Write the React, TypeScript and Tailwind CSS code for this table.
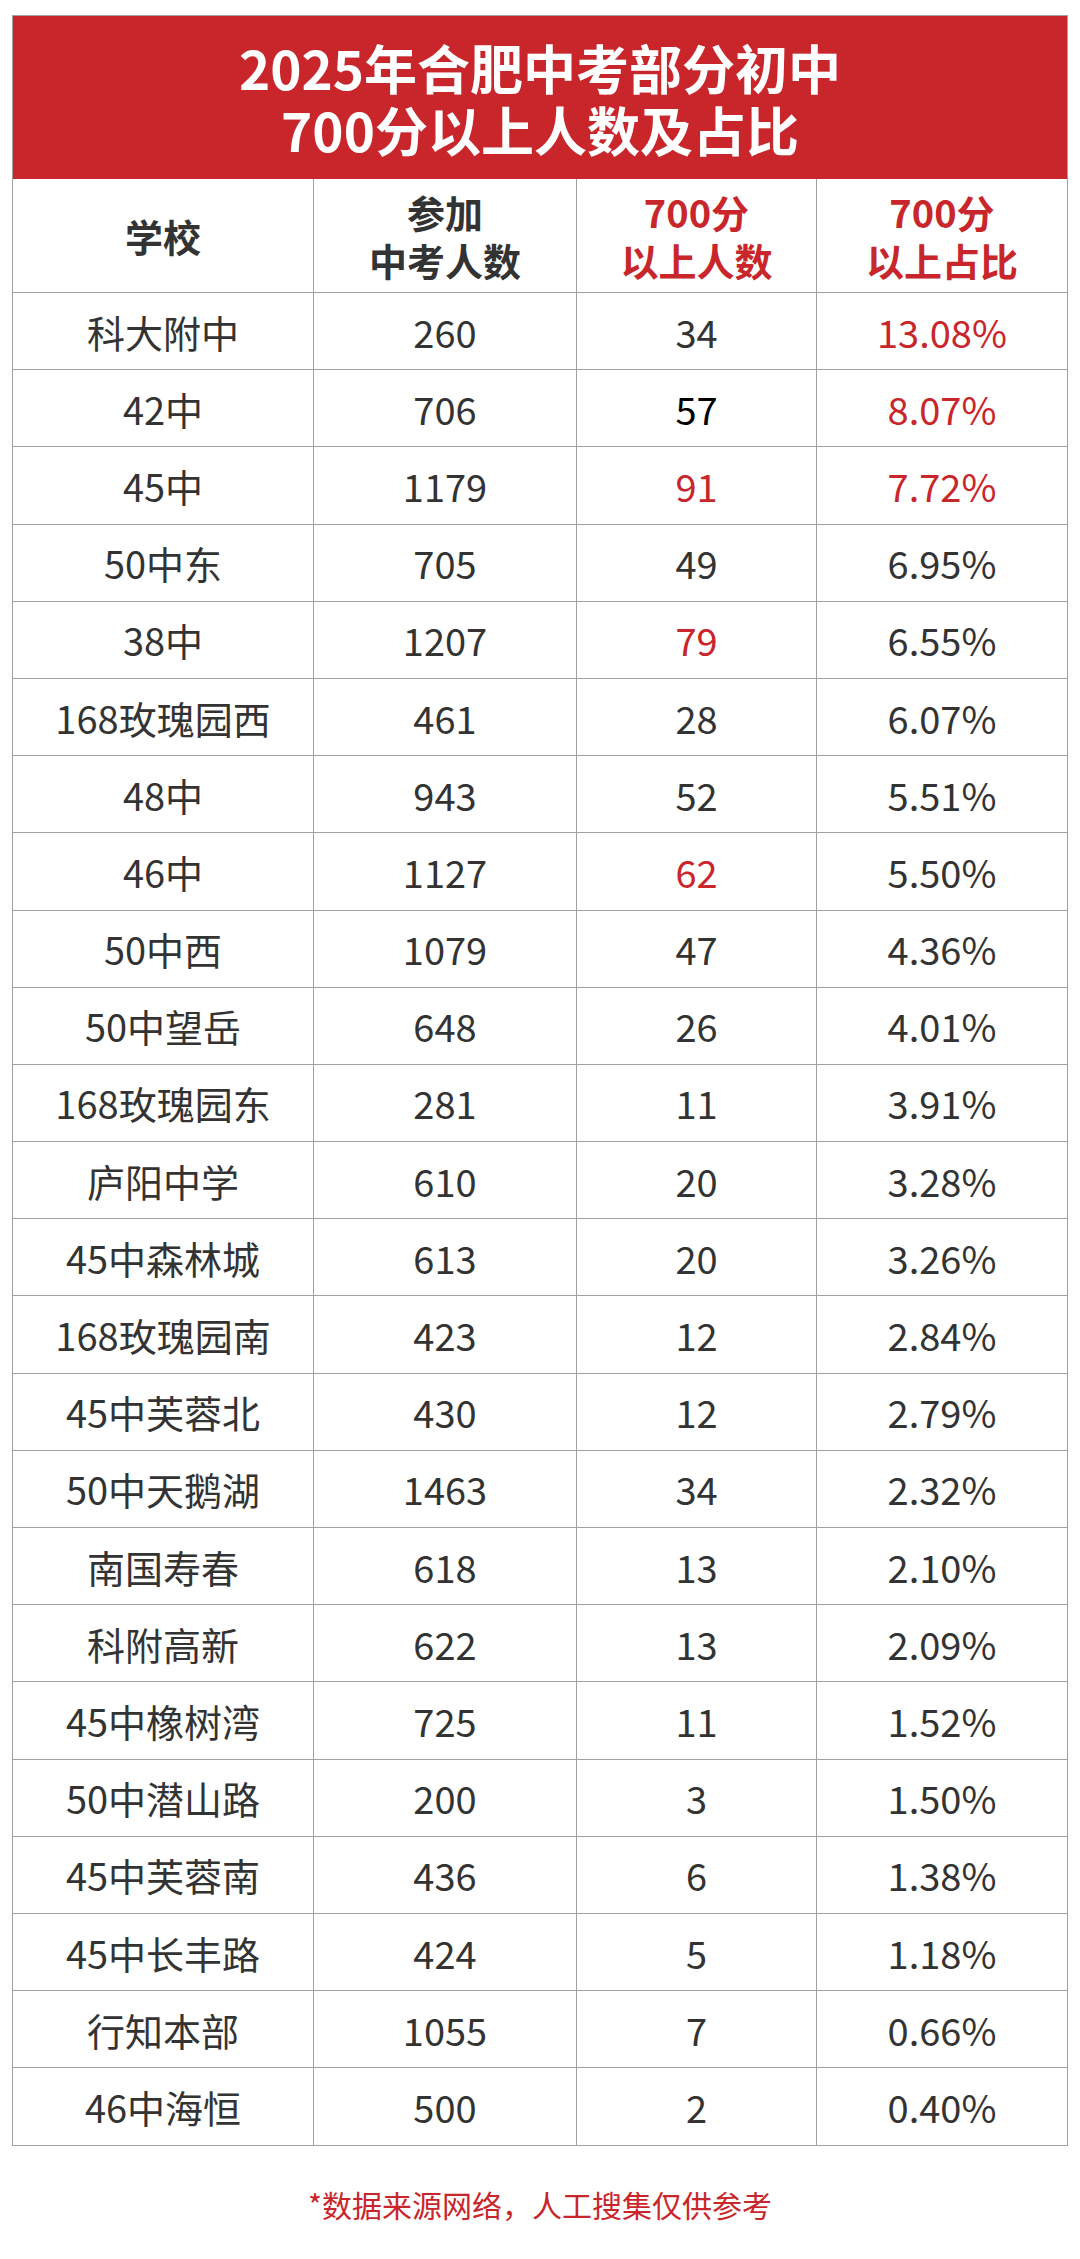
type Row = {
  name: string;
  total: string;
  count: string;
  pct: string;
  countColor?: string;
  pctColor?: string;
};

const RED = "text-[#c8262b]";

const rows: Row[] = [
  { name: "科大附中", total: "260", count: "34", pct: "13.08%", pctColor: RED },
  { name: "42中", total: "706", count: "57", pct: "8.07%", countColor: "text-black", pctColor: RED },
  { name: "45中", total: "1179", count: "91", pct: "7.72%", countColor: RED, pctColor: RED },
  { name: "50中东", total: "705", count: "49", pct: "6.95%" },
  { name: "38中", total: "1207", count: "79", pct: "6.55%", countColor: RED },
  { name: "168玫瑰园西", total: "461", count: "28", pct: "6.07%" },
  { name: "48中", total: "943", count: "52", pct: "5.51%" },
  { name: "46中", total: "1127", count: "62", pct: "5.50%", countColor: RED },
  { name: "50中西", total: "1079", count: "47", pct: "4.36%" },
  { name: "50中望岳", total: "648", count: "26", pct: "4.01%" },
  { name: "168玫瑰园东", total: "281", count: "11", pct: "3.91%" },
  { name: "庐阳中学", total: "610", count: "20", pct: "3.28%" },
  { name: "45中森林城", total: "613", count: "20", pct: "3.26%" },
  { name: "168玫瑰园南", total: "423", count: "12", pct: "2.84%" },
  { name: "45中芙蓉北", total: "430", count: "12", pct: "2.79%" },
  { name: "50中天鹅湖", total: "1463", count: "34", pct: "2.32%" },
  { name: "南国寿春", total: "618", count: "13", pct: "2.10%" },
  { name: "科附高新", total: "622", count: "13", pct: "2.09%" },
  { name: "45中橡树湾", total: "725", count: "11", pct: "1.52%" },
  { name: "50中潜山路", total: "200", count: "3", pct: "1.50%" },
  { name: "45中芙蓉南", total: "436", count: "6", pct: "1.38%" },
  { name: "45中长丰路", total: "424", count: "5", pct: "1.18%" },
  { name: "行知本部", total: "1055", count: "7", pct: "0.66%" },
  { name: "46中海恒", total: "500", count: "2", pct: "0.40%" },
];

const cols = "grid grid-cols-[301px_263px_240px_250px]";
const cell = "flex items-center justify-center border-b-[1.5px] border-[#a0a0a0]";
const cellR = cell + " border-r-[1.5px]";

export default function App() {
  return (
    <div
      className="w-[1080px] h-[2259px] bg-white pt-[15px]"
      style={{ fontFamily: '"Noto Sans CJK SC", "Noto Sans", sans-serif' }}
    >
      <div className="ml-[12px] w-[1056px] border-x-[1.5px] border-t-[1.5px] border-[#a0a0a0]">
        {/* title banner */}
        <div className="h-[163px] bg-[#c8262b] flex flex-col items-center justify-center text-white font-bold text-[53px] leading-[62px]">
          <div>2025年合肥中考部分初中</div>
          <div>700分以上人数及占比</div>
        </div>

        {/* column headings */}
        <div className={cols + " h-[114px] text-[38px] leading-[48px] font-bold text-[#333333]"}>
          <div className={cellR}>学校</div>
          <div className={cellR + " flex-col"}>
            <span>参加</span>
            <span>中考人数</span>
          </div>
          <div className={cellR + " flex-col " + RED}>
            <span>700分</span>
            <span>以上人数</span>
          </div>
          <div className={cell + " flex-col " + RED}>
            <span>700分</span>
            <span>以上占比</span>
          </div>
        </div>

        {rows.map((r) => (
          <div key={r.name} className={cols + " h-[77.2px] text-[38px] text-[#333333]"}>
            <div className={cellR}>{r.name}</div>
            <div className={cellR}>{r.total}</div>
            <div className={cellR + " " + (r.countColor ?? "")}>{r.count}</div>
            <div className={cell + " " + (r.pctColor ?? "")}>{r.pct}</div>
          </div>
        ))}
      </div>

      <p className={"mt-[40px] text-center text-[30px] leading-[36px] " + RED}>
        *数据来源网络，人工搜集仅供参考
      </p>
    </div>
  );
}
